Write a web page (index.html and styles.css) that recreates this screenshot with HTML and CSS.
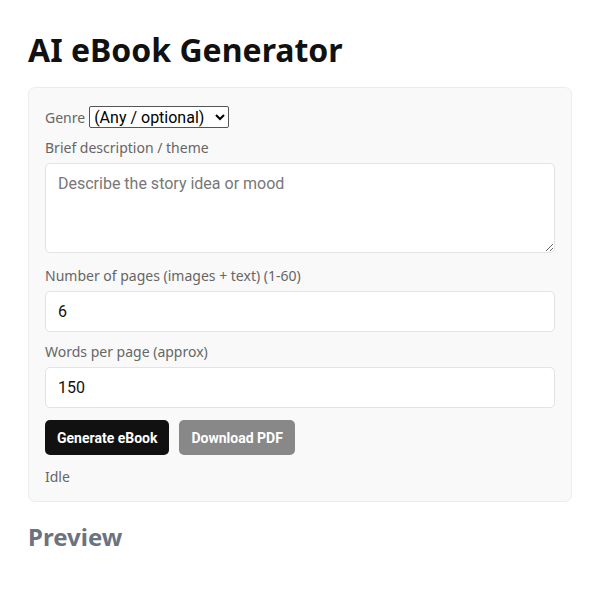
FILE: index.html
```html
<!doctype html>
<html>
<head>
    <meta charset="utf-8">
    <title>AI eBook Generator</title>
    <link rel="stylesheet" href="styles.css">
</head>
<body>

<div class="page">
    <h1>AI eBook Generator</h1>

    <div class="card">
        <div class="row">
            <label for="genre">Genre</label>
            <select id="genre">
                <option>(Any / optional)</option>
                <option>Fantasy</option>
                <option>Sci-Fi</option>
                <option>Mystery</option>
            </select>
        </div>

        <label class="field-label" for="desc">Brief description / theme</label>
        <textarea id="desc" placeholder="Describe the story idea or mood"></textarea>

        <label class="field-label" for="pages">Number of pages (images + text) (1-60)</label>
        <input id="pages" type="number" value="6">

        <label class="field-label" for="words">Words per page (approx)</label>
        <input id="words" type="number" value="150">

        <div class="actions">
            <button class="primary">Generate eBook</button>
            <button class="secondary" disabled>Download PDF</button>
        </div>

        <div class="status">Idle</div>
    </div>

    <h2 class="preview">Preview</h2>
</div>

</body>
</html>
```

FILE: styles.css
```css
html,
body {
    margin: 0;
    padding: 0;
    background: #fff;
    font-family: "Noto Sans", sans-serif;
    color: #111;
}

.page {
    padding: 0 28px;
}

h1 {
    font-size: 32px;
    font-weight: 700;
    margin: 0;
    padding-top: 30px;
    line-height: 40px;
}

.card {
    margin-top: 17px;
    background: #f9f9f9;
    border: 1px solid #ececec;
    border-radius: 7px;
    padding: 18px 16px 14px 16px;
}

.row {
    display: flex;
    align-items: center;
    gap: 4px;
    margin-bottom: 2px;
}

label {
    font-size: 14px;
    color: #666;
}

select {
    font-family: Roboto, sans-serif;
    font-size: 16px;
    color: #000;
    height: 22px;
    width: 140px;
    padding: 0;
    border: 1px solid #555;
    border-radius: 2px;
    background: #fff;
}

.field-label {
    display: block;
    margin-top: 10px;
    margin-bottom: 5px;
    line-height: 20px;
}

textarea + .field-label {
    margin-top: 13px;
}

textarea,
input {
    display: block;
    box-sizing: border-box;
    width: 100%;
    font-family: Roboto, sans-serif;
    font-size: 16px;
    color: #111;
    background: #fff;
    border: 1px solid #e3e3e3;
    border-radius: 5px;
    padding: 10px 12px;
    margin: 0;
}

textarea {
    height: 90px;
    resize: vertical;
}

textarea::placeholder {
    color: #777;
}

input {
    height: 41px;
    -moz-appearance: textfield;
}

input::-webkit-outer-spin-button,
input::-webkit-inner-spin-button {
    -webkit-appearance: none;
    margin: 0;
}

.actions {
    display: flex;
    gap: 10px;
    margin-top: 12px;
}

button {
    font-family: Roboto, sans-serif;
    font-weight: 700;
    font-size: 14px;
    color: #fff;
    border: none;
    border-radius: 5px;
    height: 35px;
    padding: 0 12px;
}

.primary {
    background: #111;
}

.secondary {
    background: #888;
}

.status {
    font-size: 14px;
    color: #666;
    margin-top: 12px;
    line-height: 20px;
}

.preview {
    font-size: 24px;
    color: #6b7280;
    margin: 19px 0 0 0;
    line-height: 32px;
}
```
